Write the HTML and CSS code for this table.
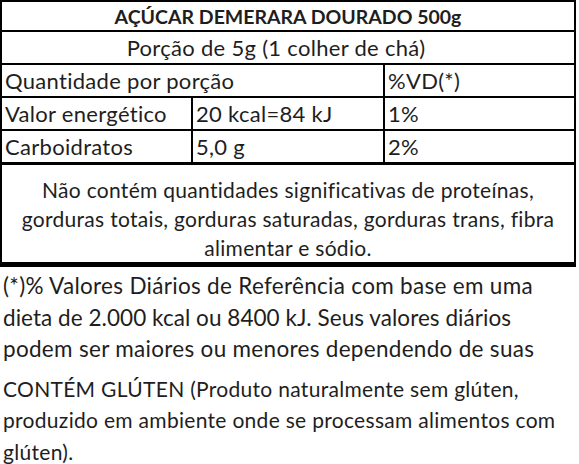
FILE: index.html
```html
<!DOCTYPE html>
<html lang="pt-BR">
<head>
<meta charset="utf-8">
<title>Informação Nutricional</title>
<link rel="stylesheet" href="styles.css">
</head>
<body>
<div class="table">
  <div class="row title">AÇÚCAR DEMERARA DOURADO 500g</div>
  <div class="row serving">Porção de 5g (1 colher de chá)</div>
  <div class="row cols">
    <div class="cell span2">Quantidade por porção</div>
    <div class="cell sep">%VD(*)</div>
  </div>
  <div class="row cols">
    <div class="cell">Valor energético</div>
    <div class="cell sep">20 kcal=84 kJ</div>
    <div class="cell sep">1%</div>
  </div>
  <div class="row cols last">
    <div class="cell">Carboidratos</div>
    <div class="cell sep">5,0 g</div>
    <div class="cell sep">2%</div>
  </div>
  <div class="row notes">Não contém quantidades significativas de proteínas,<br>gorduras totais, gorduras saturadas, gorduras trans, fibra<br>alimentar e sódio.</div>
</div>
<p class="foot">(*)% Valores Diários de Referência com base em uma<br><span class="tight">dieta de 2.000 kcal ou 8400 kJ. Seus valores diários</span><br>podem ser maiores ou menores dependendo de suas</p>
<p class="foot second">CONTÉM GLÚTEN (Produto naturalmente sem glúten,<br>produzido em ambiente onde se processam alimentos com<br>glúten).</p>
</body>
</html>
```
FILE: styles.css
```css
html, body {
  margin: 0;
  padding: 0;
  background: #fff;
}
body {
  font-family: Lato, "Liberation Sans", sans-serif;
  font-size: 22px;
  letter-spacing: 0.3px;
  color: #1e1e1e;
  width: 579px;
}
.table {
  width: 572px;
  border: 2px solid #000;
}
.row {
  border-bottom: 2px solid #000;
  height: 31px;
  line-height: 31px;
  box-sizing: content-box;
  white-space: nowrap;
}
.title {
  text-align: center;
  font-weight: bold;
  font-size: 19.5px;
  letter-spacing: 0;
  height: 28px;
  line-height: 29px;
}
.serving {
  text-align: center;
  padding-right: 24px;
}
.cols {
  display: grid;
  grid-template-columns: 189px 192px 1fr;
}
.cols.last {
  border-bottom-width: 3px;
}
.cell {
  padding-left: 3px;
}
.span2 {
  grid-column: span 2;
}
.sep {
  border-left: 2px solid #000;
}
.notes {
  height: auto;
  text-align: center;
  font-size: 21px;
  line-height: 29px;
  padding: 10px 0 0;
  border-bottom-width: 3px;
}
.foot {
  margin: 3px 0 0 3px;
  font-size: 22.5px;
  line-height: 31.5px;
  white-space: nowrap;
}
.foot .tight {
  letter-spacing: 0.05px;
}
.foot.second {
  margin-top: 8px;
  font-size: 21px;
}
```
